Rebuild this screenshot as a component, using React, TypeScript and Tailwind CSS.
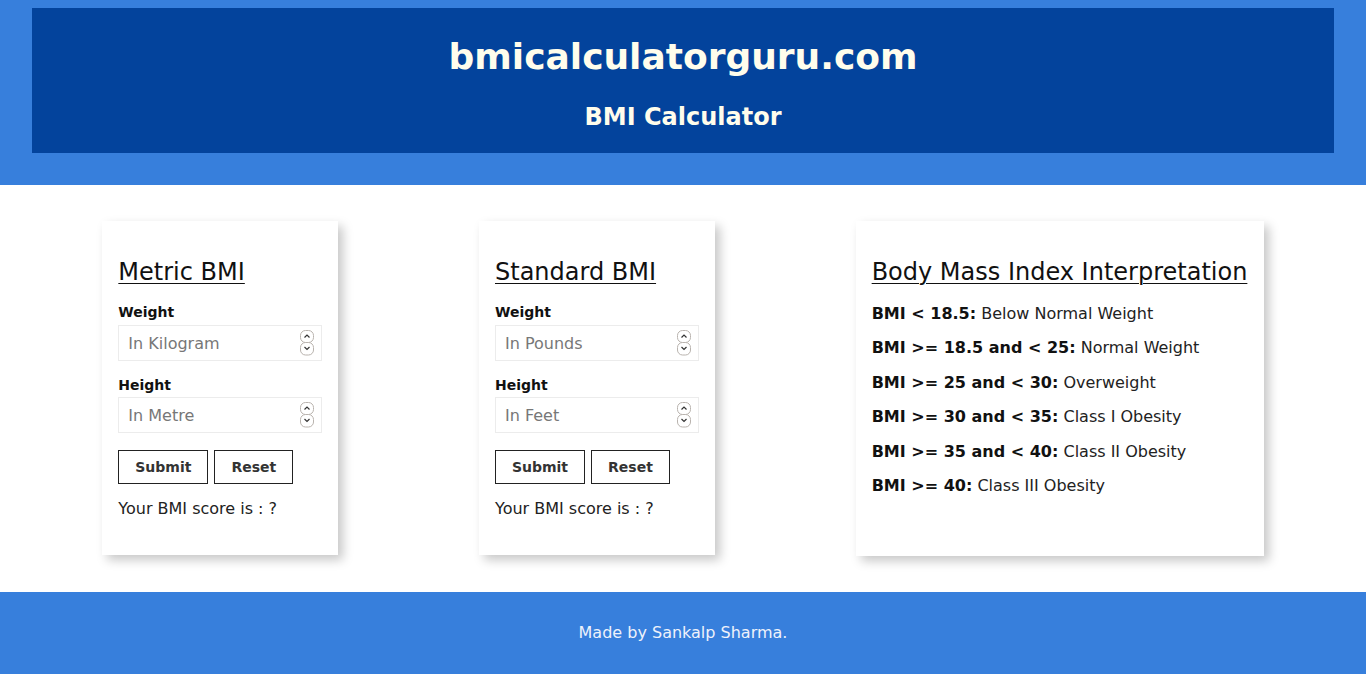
import React from "react";

function Spinner() {
  return (
    <svg width="14" height="26" viewBox="0 0 14 26" className="absolute right-[8px] top-[5px] pointer-events-none">
      <rect x="0.5" y="0.5" width="13" height="12" rx="5" fill="white" stroke="#b9b3ae" />
      <rect x="0.5" y="12.5" width="13" height="12.5" rx="5" fill="white" stroke="#b9b3ae" />
      <path d="M4.5 7.5 L7 5 L9.5 7.5" fill="none" stroke="#333" strokeWidth="1.2" />
      <path d="M4.5 17 L7 19.5 L9.5 17" fill="none" stroke="#333" strokeWidth="1.2" />
    </svg>
  );
}

function NumberField({ placeholder }: { placeholder: string }) {
  return (
    <div className="relative">
      <input
        type="text"
        placeholder={placeholder}
        className="block w-full h-[36px] border border-[#ececec] bg-white pl-[9px] pr-[28px] text-[16px] text-[#222] placeholder:text-[#777] outline-none"
      />
      <Spinner />
    </div>
  );
}

function Calc({ title, w, h }: { title: string; w: string; h: string }) {
  return (
    <div className="w-[236px] bg-white px-4 pt-[37px] pb-[37px] shadow-[5px_5px_10px_rgba(0,0,0,0.22)]">
      <h2 className="text-[24px] leading-[28px] underline underline-offset-[3px] decoration-1 text-[#111]">{title}</h2>
      <div className="mt-[18px] text-[14px] leading-[16px] font-bold text-[#111]">Weight</div>
      <div className="mt-[5px]">
        <NumberField placeholder={w} />
      </div>
      <div className="mt-[16px] text-[14px] leading-[16px] font-bold text-[#111]">Height</div>
      <div className="mt-[4px]">
        <NumberField placeholder={h} />
      </div>
      <div className="mt-[17px] flex gap-[6px]">
        <button className="w-[90px] h-[34px] border border-[#222] bg-white text-[14px] font-bold text-[#333]">Submit</button>
        <button className="w-[79px] h-[34px] border border-[#222] bg-white text-[14px] font-bold text-[#333]">Reset</button>
      </div>
      <p className="mt-[15px] text-[16px] leading-[19px] text-[#222]">Your BMI score is : ?</p>
    </div>
  );
}

const rows: [string, string][] = [
  ["BMI < 18.5:", "Below Normal Weight"],
  ["BMI >= 18.5 and < 25:", "Normal Weight"],
  ["BMI >= 25 and < 30:", "Overweight"],
  ["BMI >= 30 and < 35:", "Class I Obesity"],
  ["BMI >= 35 and < 40:", "Class II Obesity"],
  ["BMI >= 40:", "Class III Obesity"],
];

export default function App() {
  return (
    <div className="font-['DejaVu_Sans',sans-serif] min-h-[674px] flex flex-col bg-white">
      <header className="bg-[#377fdc] pt-2 px-8 pb-8">
        <div className="bg-[#03439c] h-[145px] pt-[28px] text-center text-[#fffdec]">
          <h1 className="text-[36px] leading-[42px] font-bold">bmicalculatorguru.com</h1>
          <h2 className="mt-[25px] text-[24px] leading-[28px] font-bold">BMI Calculator</h2>
        </div>
      </header>
      <main className="flex justify-around items-start px-8 pt-9 pb-9 h-[407px]">
        <Calc title="Metric BMI" w="In Kilogram" h="In Metre" />
        <Calc title="Standard BMI" w="In Pounds" h="In Feet" />
        <div className="w-[408px] h-[335px] bg-white px-4 pt-[37px] shadow-[5px_5px_10px_rgba(0,0,0,0.22)]">
          <h2 className="text-[24px] leading-[28px] underline underline-offset-[3px] decoration-1 text-[#111]">Body Mass Index Interpretation</h2>
          <div className="mt-[19px] flex flex-col gap-[15.8px] text-[16px] leading-[18.6px] text-[#222]">
            {rows.map(([b, t]) => (
              <p key={b}>
                <b className="text-[#111]">{b}</b> {t}
              </p>
            ))}
          </div>
        </div>
      </main>
      <footer className="bg-[#377fdc] h-[82px] flex items-center justify-center text-[16px] text-[#eef2fb] flex-1">
        Made by Sankalp Sharma.
      </footer>
    </div>
  );
}
